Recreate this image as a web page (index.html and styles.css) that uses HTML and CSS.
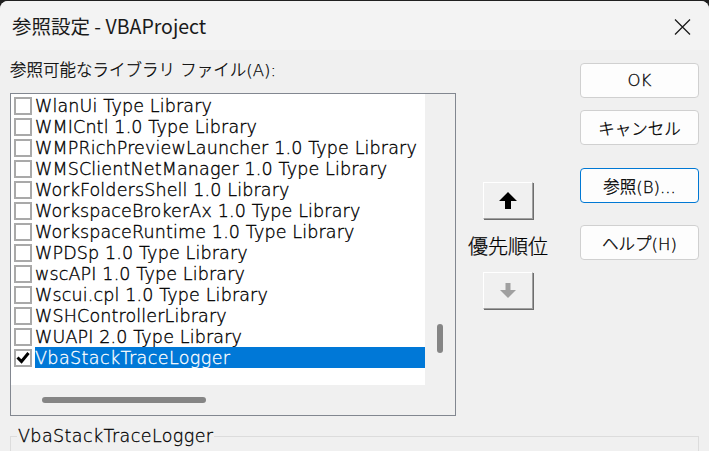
FILE: index.html
```html
<!doctype html>
<html lang="ja">
<head>
    <meta charset="UTF-8">
    <title>参照設定 - VBAProject</title>
    <link rel="stylesheet" href="styles.css">
</head>
<body>
<div class="window">
    <!--タイトル-->
    <div class="titlebar">
        <span class="title">参照設定 - VBAProject</span>
        <svg class="close" width="17" height="16" viewBox="0 0 17 16">
            <path d="M1 0.5 L16 15.5 M16 0.5 L1 15.5" stroke="#1b1b1b" stroke-width="1.3" fill="none"/>
        </svg>
    </div>

    <div class="content">
        <!--ライブラリ一覧-->
        <div class="col-list">
            <div class="caption">参照可能なライブラリ ファイル(A):</div>
            <div class="listbox">
                <ul class="items">
                    <li class="item"><span class="check"></span><span class="name">WlanUi Type Library</span></li>
                    <li class="item"><span class="check"></span><span class="name">WMICntl 1.0 Type Library</span></li>
                    <li class="item"><span class="check"></span><span class="name">WMPRichPreviewLauncher 1.0 Type Library</span></li>
                    <li class="item"><span class="check"></span><span class="name">WMSClientNetManager 1.0 Type Library</span></li>
                    <li class="item"><span class="check"></span><span class="name">WorkFoldersShell 1.0 Library</span></li>
                    <li class="item"><span class="check"></span><span class="name">WorkspaceBrokerAx 1.0 Type Library</span></li>
                    <li class="item"><span class="check"></span><span class="name">WorkspaceRuntime 1.0 Type Library</span></li>
                    <li class="item"><span class="check"></span><span class="name">WPDSp 1.0 Type Library</span></li>
                    <li class="item"><span class="check"></span><span class="name">wscAPI 1.0 Type Library</span></li>
                    <li class="item"><span class="check"></span><span class="name">Wscui.cpl 1.0 Type Library</span></li>
                    <li class="item"><span class="check"></span><span class="name">WSHControllerLibrary</span></li>
                    <li class="item"><span class="check"></span><span class="name">WUAPI 2.0 Type Library</span></li>
                    <li class="item selected">
                        <span class="check">
                            <svg width="14" height="14" viewBox="0 0 14 14">
                                <path d="M1.5 6.5 L5.5 10.5 L12.5 2" stroke="#000" stroke-width="3" fill="none"/>
                            </svg>
                        </span><span class="name">VbaStackTraceLogger</span>
                    </li>
                </ul>
                <div class="vscroll"><div class="vthumb"></div></div>
                <div class="hscroll"><div class="hthumb"></div></div>
            </div>
        </div>

        <!--優先順位-->
        <div class="col-priority">
            <button class="arrow">
                <svg width="18" height="17" viewBox="0 0 18 17">
                    <polygon points="9,0 18,9 12,9 12,17 6,17 6,9 0,9" fill="#000"/>
                </svg>
            </button>
            <div class="priority-label">優先順位</div>
            <button class="arrow" disabled>
                <svg width="16" height="15" viewBox="0 0 16 15">
                    <polygon points="5.5,0 10.5,0 10.5,7 16,7 8,15 0,7 5.5,7" fill="#a0a0a0"/>
                </svg>
            </button>
        </div>

        <!--ボタン-->
        <div class="col-buttons">
            <button class="btn btn-ok">OK</button>
            <button class="btn btn-cancel">キャンセル</button>
            <button class="btn btn-browse focus">参照(B)...</button>
            <button class="btn btn-help">ヘルプ(H)</button>
        </div>
    </div>

    <fieldset class="group">
        <legend>VbaStackTraceLogger</legend>
    </fieldset>
</div>
</body>
</html>
```

FILE: styles.css
```css
html, body {
    margin: 0;
    padding: 0;
}

body {
    background-color: #202020;
    font-family: "DejaVu Sans", "Noto Sans CJK JP", sans-serif;
    font-weight: 200;
    color: #000;
}

ul {
    margin: 0;
    padding: 0;
}

li {
    list-style: none;
}

.window {
    width: 709px;
    height: 450px;
    margin-top: 1px;
    background-color: #f0f0f0;
    border-radius: 8px 8px 0 0;
    overflow: hidden;
}

.titlebar {
    height: 49px;
    background-color: #f3f3f3;
    display: flex;
    align-items: center;
    padding: 0 18px 0 12px;
}

.title {
    flex: 1;
    font-family: "Noto Sans CJK JP", sans-serif;
    font-weight: 400;
    font-size: 19.5px;
    color: #1a1a1a;
    padding-bottom: 1px;
}

.close {
    margin-top: 2px;
}

.content {
    display: flex;
    padding-left: 10px;
}

.caption {
    height: 43px;
    box-sizing: border-box;
    padding-top: 9px;
    font-size: 16.5px;
    line-height: 24px;
    -webkit-text-stroke: 0.25px #000;
}

.listbox {
    width: 446px;
    height: 323px;
    box-sizing: border-box;
    border: 1px solid #828790;
    display: grid;
    grid-template-columns: 414px 30px;
    grid-template-rows: 291px 30px;
}

.items {
    background-color: #fff;
    padding-top: 1px;
    overflow: hidden;
}

.item {
    height: 21px;
    display: flex;
    align-items: center;
    font-size: 17.5px;
    line-height: 21px;
    letter-spacing: 0.15px;
    white-space: nowrap;
    -webkit-text-stroke: 0.35px #000;
}

.check {
    width: 18px;
    height: 18px;
    box-sizing: border-box;
    border: 2px solid #a9a9a9;
    background-color: #fff;
    margin-left: 3px;
    margin-right: 3px;
    display: flex;
    align-items: center;
    justify-content: center;
}

.name {
    flex: 1;
    height: 21px;
    box-sizing: border-box;
    padding-top: 1px;
    overflow: hidden;
}

.selected .name {
    background-color: #0078d7;
    color: #fff;
    letter-spacing: 0.4px;
    -webkit-text-stroke: 0.3px #fff;
}

.vscroll {
    grid-row: 1 / 3;
    grid-column: 2;
    display: flex;
    justify-content: center;
    padding-top: 230px;
}

.vthumb {
    width: 6px;
    height: 29px;
    border-radius: 3px;
    background-color: #858585;
}

.hscroll {
    grid-row: 2;
    grid-column: 1;
    padding: 12px 0 0 31px;
}

.hthumb {
    width: 164px;
    height: 6px;
    border-radius: 3px;
    background-color: #858585;
}

.col-priority {
    width: 50px;
    margin-left: 27px;
    padding-top: 132px;
    display: flex;
    flex-direction: column;
    align-items: center;
}

.arrow {
    width: 50px;
    height: 37px;
    padding: 0;
    background-color: #f0f0f0;
    border: 1px solid;
    border-color: #ffffff #a0a0a0 #a0a0a0 #ffffff;
    box-shadow: 1px 1px 0 #6d6d6d;
    display: flex;
    align-items: center;
    justify-content: center;
}

.priority-label {
    width: 90px;
    text-align: center;
    font-size: 20px;
    line-height: 28px;
    margin: 14px 0 11px;
    -webkit-text-stroke: 0.25px #000;
}

.col-buttons {
    width: 119px;
    margin-left: 47px;
    padding-top: 13px;
    display: flex;
    flex-direction: column;
}

.btn {
    height: 35px;
    padding: 0;
    background-color: #fdfdfd;
    border: 1px solid #d0d0d0;
    border-radius: 4px;
    font-family: "DejaVu Sans", "Noto Sans CJK JP", sans-serif;
    font-weight: 200;
    font-size: 16.5px;
    color: #000;
    -webkit-text-stroke: 0.3px #000;
}

.btn-cancel {
    margin-top: 12px;
}

.btn-browse {
    margin-top: 23px;
}

.btn-help {
    margin-top: 22px;
}

.btn.focus {
    border-color: #0078d4;
}

.group {
    margin: 10px 0 0 10px;
    width: 689px;
    height: 60px;
    box-sizing: border-box;
    border: 1px solid #dcdcdc;
    padding: 0 0 0 6px;
}

.group legend {
    padding: 0 1px;
    font-size: 17.5px;
    line-height: 20px;
    letter-spacing: 0.4px;
    -webkit-text-stroke: 0.3px #000;
}
```
